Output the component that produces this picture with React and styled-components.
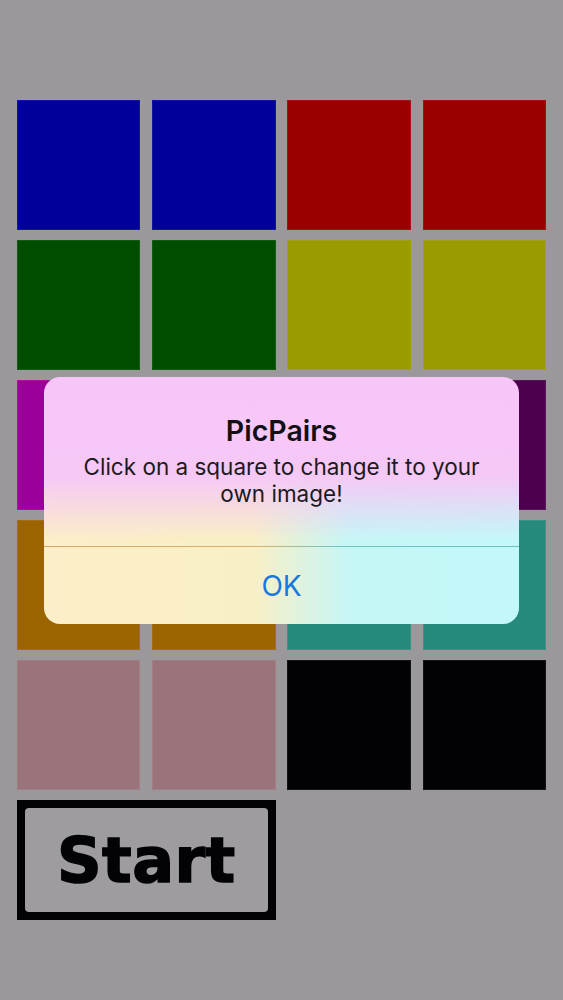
import React from 'react';
import styled, { createGlobalStyle } from 'styled-components';

const GlobalStyle = createGlobalStyle`
  html, body {
    margin: 0;
    padding: 0;
    background: #9a989b;
  }
  body {
    font-family: Inter, "Liberation Sans", Arial, sans-serif;
  }
`;

const tiles = [
  '#00009b', '#00009b', '#9b0000', '#9b0000',
  '#004d00', '#004d00', '#9b9a00', '#9b9a00',
  '#9b009b', '#9b009b', '#4d004d', '#4d004d',
  '#9b6400', '#9b6400', '#268a7b', '#268a7b',
  '#9b737a', '#9b737a', '#020103', '#020103',
];

function App() {
  return (
    <Screen>
      <GlobalStyle />
      <Board>
        {tiles.map((c, i) => (
          <Tile key={i} color={c} />
        ))}
        <StartButton>
          <StartFace>Start</StartFace>
        </StartButton>
      </Board>

      <Alert>
        <AlertBody>
          <AlertTitle>PicPairs</AlertTitle>
          <AlertMessage>Click on a square to change it to your own image!</AlertMessage>
        </AlertBody>
        <Divider />
        <AlertAction>OK</AlertAction>
      </Alert>
    </Screen>
  );
}
export default App;

const Screen = styled.div`
  position: relative;
  width: 563px;
  height: 1000px;
  overflow: hidden;
  background: #9a989b;
`;

const Board = styled.div`
  display: grid;
  grid-template-columns: repeat(4, 1fr);
  grid-auto-rows: 130px;
  column-gap: 11.7px;
  row-gap: 10px;
  padding: 100px 17px 0 17px;
`;

const Tile = styled.div`
  background: ${p => p.color};
  box-shadow: inset 0 0 0 1px rgba(255, 255, 255, 0.08);
`;

const StartButton = styled.div`
  grid-column: span 2;
  height: 120px;
  box-sizing: border-box;
  padding: 8px;
  background: #030204;
  display: flex;
`;

const StartFace = styled.div`
  flex: 1;
  display: flex;
  align-items: center;
  justify-content: center;
  background: #9e9ca0;
  border-radius: 4px;
  font-family: "DejaVu Sans", "Liberation Sans", sans-serif;
  font-weight: bold;
  font-size: 62px;
  letter-spacing: 0.5px;
  -webkit-text-stroke: 1.5px #030204;
  color: #030204;
`;

const Alert = styled.div`
  position: absolute;
  left: 44px;
  top: 377px;
  width: 475px;
  height: 247px;
  border-radius: 16px;
  overflow: hidden;
  display: flex;
  flex-direction: column;
  background:
    linear-gradient(to bottom, #f7c6f8 0%, #f6c8f6 40%, rgba(246, 200, 246, 0) 66%),
    linear-gradient(to right, #fbeec8 0%, #f9efc6 44%, #c6f6f6 64%, #c3f8f8 100%);
`;

const AlertBody = styled.div`
  display: flex;
  flex-direction: column;
  align-items: center;
  text-align: center;
  padding: 38px 28px 0 28px;
  height: 169px;
  box-sizing: border-box;
`;

const AlertTitle = styled.div`
  font-weight: 600;
  font-size: 28.5px;
  line-height: 32px;
  color: #111013;
`;

const AlertMessage = styled.div`
  margin-top: 6px;
  font-size: 22.5px;
  line-height: 27px;
  color: #1c1a1e;
`;

const Divider = styled.div`
  height: 1px;
  background: linear-gradient(to right, #dba862 0%, #d9b070 45%, #6cc7c6 62%, #64c4c4 100%);
`;

const AlertAction = styled.div`
  flex: 1;
  display: flex;
  align-items: center;
  justify-content: center;
  font-size: 28px;
  color: #1a78dc;
`;
